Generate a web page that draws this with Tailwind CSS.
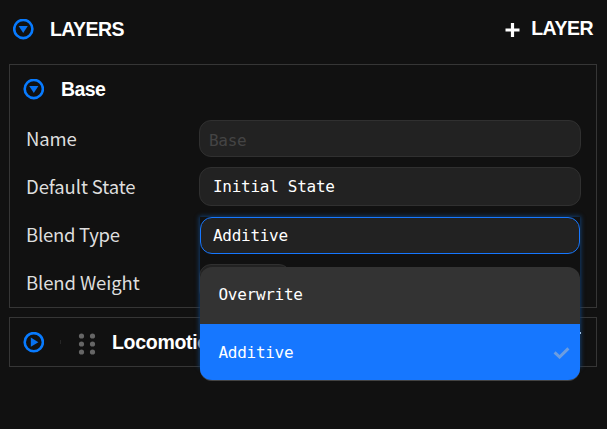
<!DOCTYPE html>
<html lang="en">
<head>
<meta charset="utf-8">
<title>Layers</title>
<script src="https://cdn.jsdelivr.net/npm/@tailwindcss/browser@4"></script>
</head>
<body class="relative h-[429px] w-[607px] overflow-hidden bg-[#111] font-['Liberation_Sans',sans-serif] text-white">
<header class="flex h-[64px] items-start pt-[18px] pr-[14px] pl-[13px]">
  <svg class="mt-[1px] h-[21px] w-[21px]" viewBox="0 0 21 21"><circle cx="10.3" cy="10" r="9.1" fill="none" stroke="#087bff" stroke-width="2.6"/><path d="M5.6 7h9.2l-4.6 7z" fill="#0872f0"/></svg>
  <h1 class="ml-[16px] text-[19.5px] leading-[22px] font-bold tracking-[-0.55px]">LAYERS</h1>
  <button class="ml-auto flex items-center">
    <svg class="mt-[2px] mr-[11px] h-[14px] w-[15px]" viewBox="0 0 15 14"><path d="M7.5 0v14M.5 7h14" stroke="#fff" stroke-width="3.2"/></svg>
    <span class="text-[19.5px] leading-[21px] font-bold tracking-[-0.5px]">LAYER</span>
  </button>
</header>
<main class="ml-[9px] flex w-[588px] flex-col gap-[9px]">
  <section class="h-[244px] border border-[#363636]">
    <div class="flex h-[55px] items-start pt-[14px] pl-[13px]">
      <svg class="h-[21px] w-[21px]" viewBox="0 0 21 21"><circle cx="10.8" cy="10" r="9.1" fill="none" stroke="#087bff" stroke-width="2.6"/><path d="M6.2 7h9.2l-4.6 7z" fill="#0872f0"/></svg>
      <h2 class="ml-[17px] text-[19.5px] leading-[21px] font-bold tracking-[-0.55px]">Base</h2>
    </div>
    <div class="grid grid-cols-[173px_382px] grid-rows-[37px_39px_38px_38px] gap-y-[10px] pl-[16px] font-['Noto_Sans_CJK_KR',sans-serif] text-[18.5px] tracking-[-0.1px] text-[#dedede]">
      <label class="self-center pt-[1px]">Name</label>
      <div class="flex items-center rounded-[12px] border border-[#303030] bg-[#222] pt-[4px] pl-[9px] font-['DejaVu_Sans_Mono',monospace] text-[16px] tracking-[-0.28px] text-[#444]">Base</div>
      <label class="self-center">Default State</label>
      <div class="flex items-center rounded-[12px] border border-[#303030] bg-[#222] pl-[13px] font-['DejaVu_Sans_Mono',monospace] text-[16px] tracking-[-0.28px] text-white">Initial State</div>
      <label class="self-center tracking-[-0.25px]">Blend Type</label>
      <div class="mx-[1px] mt-[1px] flex items-center rounded-[12px] border border-[#1677ff] bg-[#222] pt-[1px] pl-[12px] font-['DejaVu_Sans_Mono',monospace] text-[16px] tracking-[-0.28px] text-white">Additive</div>
      <label class="self-center">Blend Weight</label>
      <div class="w-[92px] rounded-[12px] border border-[#303030] bg-[#222]"></div>
    </div>
  </section>
  <section class="flex h-[50px] items-center border border-[#363636] pl-[13px]">
    <svg class="h-[21px] w-[21px]" viewBox="0 0 21 21"><circle cx="10.8" cy="10.2" r="9.1" fill="none" stroke="#087bff" stroke-width="2.6"/><path d="M7.8 5.6v9.2l7.6-4.6z" fill="#0872f0"/></svg>
    <div class="ml-[16px] h-[4px] w-px bg-[#262626]"></div>
    <svg class="mt-[4px] ml-[17px] h-[22px] w-[18px]" viewBox="0 0 18 22" fill="#666"><circle cx="3.5" cy="3" r="2.6"/><circle cx="14.5" cy="3" r="2.6"/><circle cx="3.5" cy="11" r="2.6"/><circle cx="14.5" cy="11" r="2.6"/><circle cx="3.5" cy="19" r="2.6"/><circle cx="14.5" cy="19" r="2.6"/></svg>
    <h2 class="ml-[16px] text-[19.5px] leading-[22px] font-bold tracking-[-0.3px]">Locomotion</h2>
  </section>
</main>
<!-- Focus ring around the open select -->
<div class="pointer-events-none absolute top-[217px] left-[200px] h-[150px] w-[380px] shadow-[0_0_4px_1px_#123c6c]"></div>
<!-- Select menu -->
<ul class="absolute top-[267px] left-[200px] flex h-[114px] w-[380px] flex-col overflow-hidden rounded-[12px] border-b border-[#444] bg-[#333] font-['DejaVu_Sans_Mono',monospace] text-[16px] tracking-[-0.28px]">
  <li class="flex h-[57px] items-center pb-[2px] pl-[18.5px]">Overwrite</li>
  <li class="flex h-[56px] items-center justify-between bg-[#1677ff] pt-[1px] pr-[10px] pl-[18.5px]">Additive
    <svg class="h-[12px] w-[17px]" viewBox="0 0 17 12"><path d="M1.6 5.4l5 4.6L15.4 1.4" fill="none" stroke="#6c9de0" stroke-width="3"/></svg>
  </li>
</ul>
<i class="absolute top-[332px] left-[580px] h-[2px] w-px bg-[#9cc0e8]"></i>
</body>
</html>
